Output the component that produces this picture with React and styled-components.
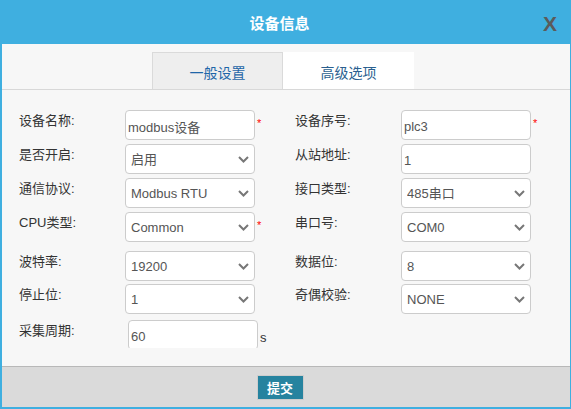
import React from "react";
import styled, { createGlobalStyle } from "styled-components";

const BLUE = "#3fafe0";

const GlobalStyle = createGlobalStyle`
  body {
    margin: 0;
    font-family: "Liberation Sans", Arial, "Noto Sans CJK SC", sans-serif;
  }
`;

const Dialog = styled.div`
  width: 571px;
  height: 409px;
  box-sizing: border-box;
  border-left: 2px solid ${BLUE};
  border-right: 1px solid ${BLUE};
  border-bottom: 2px solid ${BLUE};
  background: #f7f7f7;
  display: flex;
  flex-direction: column;
  overflow: hidden;
`;

const Header = styled.div`
  height: 44px;
  flex: none;
  background: ${BLUE};
  display: grid;
  grid-template-columns: 1fr auto 1fr;
  align-items: center;
  padding-right: 13px;
`;

const Title = styled.h1`
  grid-column: 2;
  margin: 0;
  font-size: 15px;
  font-weight: bold;
  color: #ffffff;
`;

const Close = styled.span`
  justify-self: end;
  font-size: 21px;
  font-weight: bold;
  color: #5b5b5b;
  line-height: 1;
  margin-top: 2px;
`;

const TabBar = styled.div`
  flex: none;
  display: flex;
  justify-content: center;
  padding: 8px 6px 0 0;
  border-bottom: 1px solid #d8d8d8;
`;

const Tab = styled.div`
  width: 131px;
  height: 37px;
  box-sizing: border-box;
  display: flex;
  align-items: center;
  justify-content: center;
  font-size: 14px;
  color: ${(p) => (p.active ? "#1f66a8" : "#2a5f8f")};
  background: ${(p) => (p.active ? "#eeeeee" : "#ffffff")};
  border: 1px solid ${(p) => (p.active ? "#dadada" : "transparent")};
  border-bottom: none;
  padding-top: 2px;
`;

const Form = styled.div`
  flex: none;
  height: 258px;
  box-sizing: border-box;
  overflow: hidden;
  padding: 20px 0 0 17px;
`;

const Row = styled.div`
  display: grid;
  grid-template-columns: 276px 276px;
  margin-bottom: ${(p) => p.gap}px;
`;

const Field = styled.div`
  display: grid;
  grid-template-columns: 106px 130px auto;
  align-items: start;
`;

const Label = styled.label`
  font-size: 13px;
  line-height: 20px;
  padding-top: 1px;
  color: #333;
`;

const TextInput = styled.input`
  width: 130px;
  height: 30px;
  box-sizing: border-box;
  margin: 0 0 0 ${(p) => p.shift || 0}px;
  padding: 3px 2px 0;
  border: 1px solid #cccccc;
  border-radius: 4px;
  background: #fff;
  font-family: inherit;
  font-size: 13px;
  color: #555;
  outline: none;
`;

const SelectWrap = styled.div`
  position: relative;
  width: 130px;
  height: 30px;
`;

const Select = styled.select`
  appearance: none;
  width: 100%;
  height: 100%;
  box-sizing: border-box;
  padding: 0 20px 0 5px;
  border: 1px solid #cccccc;
  border-radius: 4px;
  background: #fff;
  font-family: inherit;
  font-size: 13px;
  color: #555;
  outline: none;
`;

const Chevron = styled.svg`
  position: absolute;
  right: 6px;
  top: 12px;
  pointer-events: none;
`;

const Required = styled.span`
  color: #ff0000;
  font-size: 11px;
  line-height: 1;
  margin: 8px 0 0 2px;
`;

const Unit = styled.span`
  font-size: 13px;
  color: #333;
  align-self: center;
  margin: 4px 0 0 5px;
`;

const Footer = styled.div`
  flex: 1;
  margin-top: 18px;
  background: #dadada;
  border-top: 1px solid #b8b8b8;
  display: flex;
  align-items: center;
  justify-content: center;
  padding-right: 12px;
`;

const Submit = styled.button`
  width: 47px;
  height: 25px;
  background: #26839f;
  border: 1px solid #cdcdcd;
  color: #fff;
  font-family: inherit;
  font-size: 13px;
  font-weight: bold;
  padding: 0;
`;

const Arrow = () => (
  <Chevron width="11" height="7" viewBox="0 0 11 7">
    <path d="M1 1l4.5 4.5L10 1" fill="none" stroke="#777" strokeWidth="2" />
  </Chevron>
);

const Choice = ({ value }) => (
  <SelectWrap>
    <Select defaultValue={value}>
      <option>{value}</option>
    </Select>
    <Arrow />
  </SelectWrap>
);

const rows = [
  {
    gap: 4,
    left: { label: "设备名称:", input: "modbus设备", required: true },
    right: { label: "设备序号:", input: "plc3", required: true },
  },
  {
    gap: 4,
    left: { label: "是否开启:", select: "启用" },
    right: { label: "从站地址:", input: "1" },
  },
  {
    gap: 4,
    left: { label: "通信协议:", select: "Modbus RTU" },
    right: { label: "接口类型:", select: "485串口" },
  },
  {
    gap: 9,
    left: { label: "CPU类型:", select: "Common", required: true },
    right: { label: "串口号:", select: "COM0" },
  },
  {
    gap: 3,
    left: { label: "波特率:", select: "19200" },
    right: { label: "数据位:", select: "8" },
  },
  {
    gap: 6,
    left: { label: "停止位:", select: "1" },
    right: { label: "奇偶校验:", select: "NONE" },
  },
  {
    gap: 0,
    left: { label: "采集周期:", input: "60", shift: 3, unit: "s" },
  },
];

const FormField = ({ label, input, select, required, shift, unit }) => (
  <Field>
    <Label>{label}</Label>
    {select ? (
      <Choice value={select} />
    ) : (
      <TextInput defaultValue={input} shift={shift} />
    )}
    {required && <Required>*</Required>}
    {unit && <Unit>{unit}</Unit>}
  </Field>
);

const App = () => (
  <>
    <GlobalStyle />
    <Dialog>
      <Header>
        <Title>设备信息</Title>
        <Close>X</Close>
      </Header>
      <TabBar>
        <Tab active>一般设置</Tab>
        <Tab>高级选项</Tab>
      </TabBar>
      <Form>
        {rows.map((r, i) => (
          <Row key={i} gap={r.gap}>
            <FormField {...r.left} />
            {r.right && <FormField {...r.right} />}
          </Row>
        ))}
      </Form>
      <Footer>
        <Submit>提交</Submit>
      </Footer>
    </Dialog>
  </>
);

export default App;
